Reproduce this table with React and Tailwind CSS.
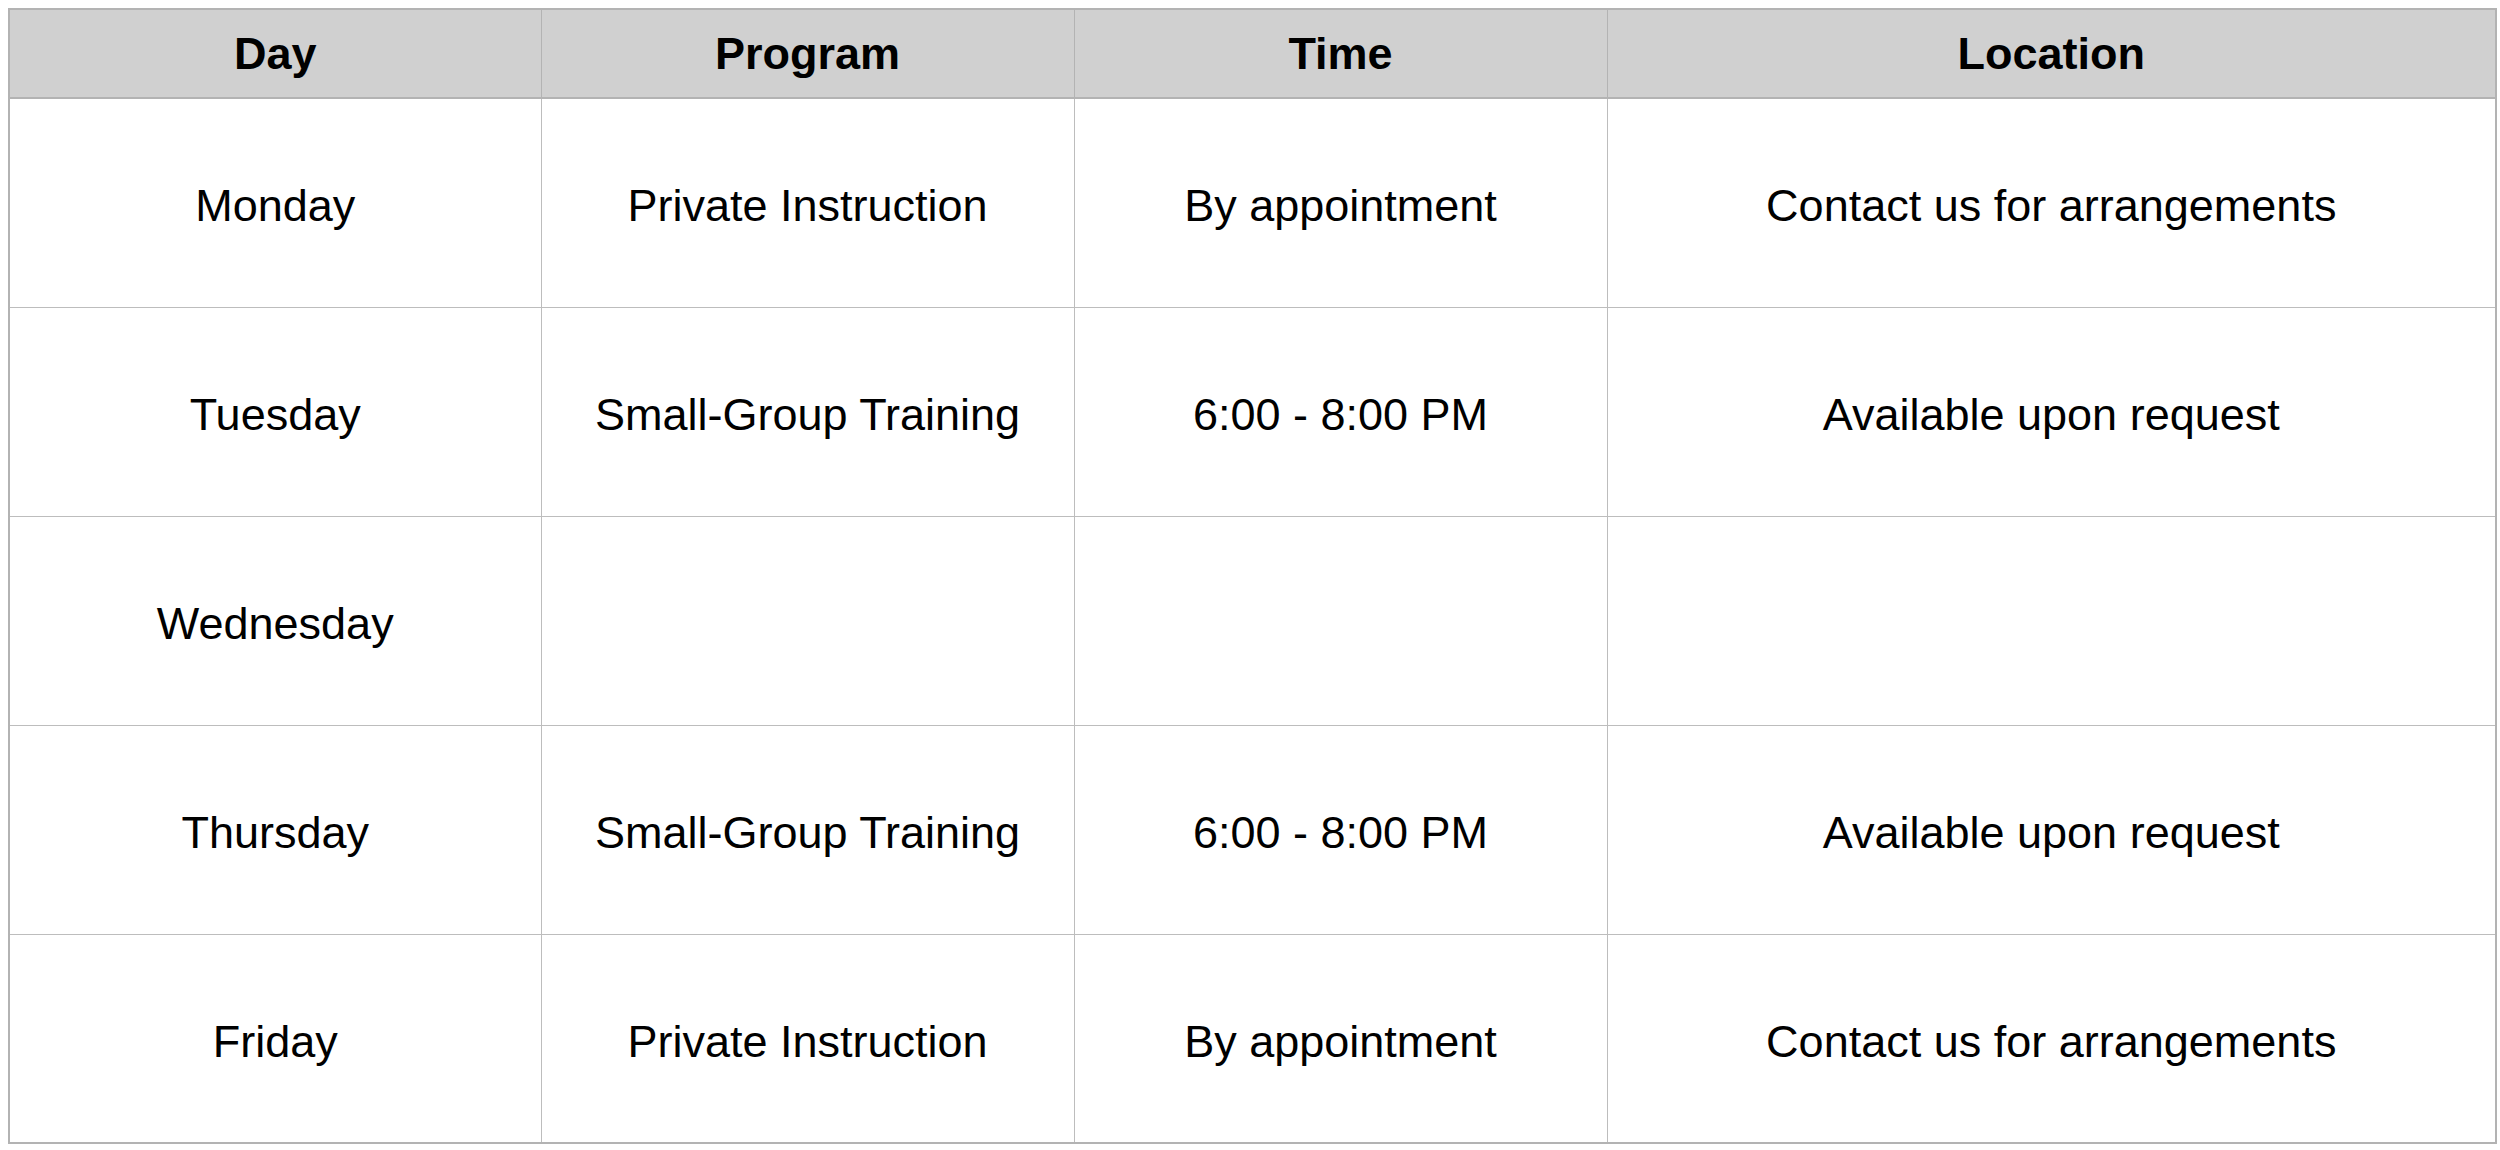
import React from 'react';

const rows = [
    ['Monday', 'Private Instruction', 'By appointment', 'Contact us for arrangements'],
    ['Tuesday', 'Small-Group Training', '6:00 - 8:00 PM', 'Available upon request'],
    ['Wednesday', '', '', ''],
    ['Thursday', 'Small-Group Training', '6:00 - 8:00 PM', 'Available upon request'],
    ['Friday', 'Private Instruction', 'By appointment', 'Contact us for arrangements'],
];

const App = () => {
    return (
        <div className="bg-white pl-2 pt-2 min-h-screen" style={{ fontFamily: '"Liberation Sans", Arial, Helvetica, sans-serif' }}>
            <table className="w-[2487px] border-collapse text-black table-fixed border-2 border-[#b3b3b3]">
                <colgroup>
                    <col className="w-[532px]" />
                    <col className="w-[533px]" />
                    <col className="w-[533px]" />
                    <col className="w-[889px]" />
                </colgroup>
                <thead>
                    <tr className="h-[89px] bg-[#d0d0d0]">
                        <th className="border border-b-2 border-[#b3b3b3] text-[45px] font-bold text-center">Day</th>
                        <th className="border border-b-2 border-[#b3b3b3] text-[45px] font-bold text-center">Program</th>
                        <th className="border border-b-2 border-[#b3b3b3] text-[45px] font-bold text-center">Time</th>
                        <th className="border border-b-2 border-[#b3b3b3] text-[45px] font-bold text-center">Location</th>
                    </tr>
                </thead>
                <tbody>
                    {rows.map((row) => (
                        <tr key={row[0]} className="h-[209px]">
                            {row.map((cell, i) => (
                                <td key={i} className="border border-[#bdbdbd] pt-[6px] text-[45px] text-center align-middle">
                                    {cell}
                                </td>
                            ))}
                        </tr>
                    ))}
                </tbody>
            </table>
        </div>
    );
};

export default App;
